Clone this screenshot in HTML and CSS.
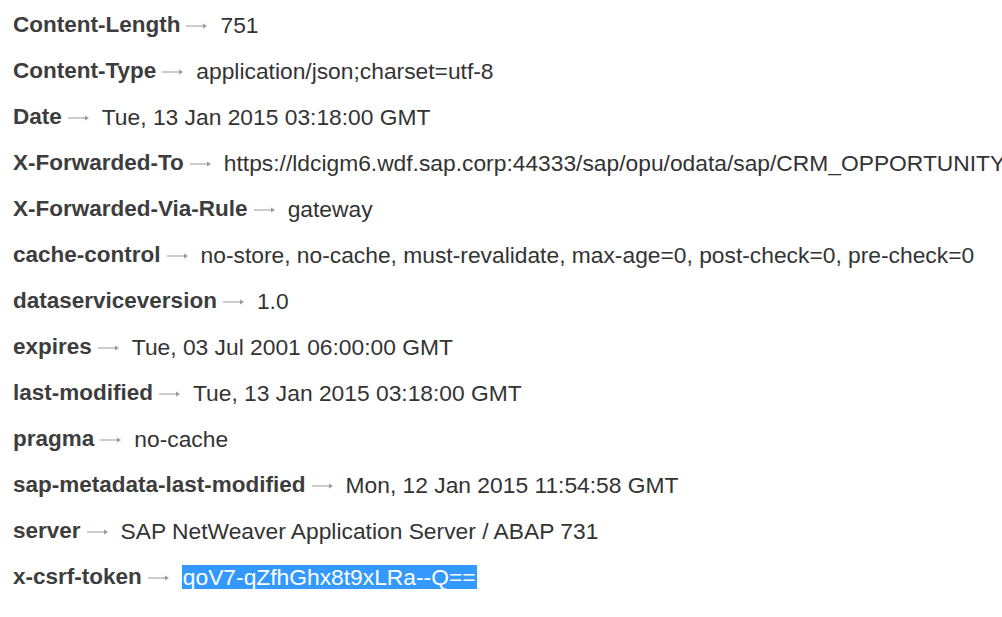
FILE: index.html
```html
<!DOCTYPE html>
<html lang="en">
<head>
    <meta charset="UTF-8">
    <title>Response Headers</title>
    <link rel="stylesheet" href="styles.css">
</head>
<body>
    <ul class="headers">
        <li><b>Content-Length</b><svg class="arrow" viewBox="0 0 22 8"><path d="M0 4h19"/><path class="head" d="M17 1.5l4 2.5-4 2.5z"/></svg><span class="val">751</span></li>
        <li><b>Content-Type</b><svg class="arrow" viewBox="0 0 22 8"><path d="M0 4h19"/><path class="head" d="M17 1.5l4 2.5-4 2.5z"/></svg><span class="val">application/json;charset=utf-8</span></li>
        <li><b>Date</b><svg class="arrow" viewBox="0 0 22 8"><path d="M0 4h19"/><path class="head" d="M17 1.5l4 2.5-4 2.5z"/></svg><span class="val">Tue, 13 Jan 2015 03:18:00 GMT</span></li>
        <li><b>X-Forwarded-To</b><svg class="arrow" viewBox="0 0 22 8"><path d="M0 4h19"/><path class="head" d="M17 1.5l4 2.5-4 2.5z"/></svg><span class="val">https://ldcigm6.wdf.sap.corp:44333/sap/opu/odata/sap/CRM_OPPORTUNITY</span></li>
        <li><b>X-Forwarded-Via-Rule</b><svg class="arrow" viewBox="0 0 22 8"><path d="M0 4h19"/><path class="head" d="M17 1.5l4 2.5-4 2.5z"/></svg><span class="val">gateway</span></li>
        <li><b>cache-control</b><svg class="arrow" viewBox="0 0 22 8"><path d="M0 4h19"/><path class="head" d="M17 1.5l4 2.5-4 2.5z"/></svg><span class="val">no-store, no-cache, must-revalidate, max-age=0, post-check=0, pre-check=0</span></li>
        <li><b>dataserviceversion</b><svg class="arrow" viewBox="0 0 22 8"><path d="M0 4h19"/><path class="head" d="M17 1.5l4 2.5-4 2.5z"/></svg><span class="val">1.0</span></li>
        <li><b>expires</b><svg class="arrow" viewBox="0 0 22 8"><path d="M0 4h19"/><path class="head" d="M17 1.5l4 2.5-4 2.5z"/></svg><span class="val">Tue, 03 Jul 2001 06:00:00 GMT</span></li>
        <li><b>last-modified</b><svg class="arrow" viewBox="0 0 22 8"><path d="M0 4h19"/><path class="head" d="M17 1.5l4 2.5-4 2.5z"/></svg><span class="val">Tue, 13 Jan 2015 03:18:00 GMT</span></li>
        <li><b>pragma</b><svg class="arrow" viewBox="0 0 22 8"><path d="M0 4h19"/><path class="head" d="M17 1.5l4 2.5-4 2.5z"/></svg><span class="val">no-cache</span></li>
        <li><b>sap-metadata-last-modified</b><svg class="arrow" viewBox="0 0 22 8"><path d="M0 4h19"/><path class="head" d="M17 1.5l4 2.5-4 2.5z"/></svg><span class="val">Mon, 12 Jan 2015 11:54:58 GMT</span></li>
        <li><b>server</b><svg class="arrow" viewBox="0 0 22 8"><path d="M0 4h19"/><path class="head" d="M17 1.5l4 2.5-4 2.5z"/></svg><span class="val">SAP NetWeaver Application Server / ABAP 731</span></li>
        <li><b>x-csrf-token</b><svg class="arrow" viewBox="0 0 22 8"><path d="M0 4h19"/><path class="head" d="M17 1.5l4 2.5-4 2.5z"/></svg><span class="val selected">qoV7-qZfhGhx8t9xLRa--Q==</span></li>
    </ul>
</body>
</html>
```

FILE: styles.css
```css
* {
    margin: 0;
    padding: 0;
    box-sizing: border-box;
}

body {
    background: #fff;
    color: #333;
    font-family: "Liberation Sans", Arial, sans-serif;
    overflow: hidden;
}

.headers {
    list-style: none;
    padding: 2px 0 0 13px;
}

.headers li {
    display: flex;
    align-items: center;
    height: 46px;
    white-space: nowrap;
}

.headers b {
    color: #3d3d3d;
    font-size: 22.5px;
    font-weight: bold;
}

.arrow {
    flex: none;
    width: 22px;
    height: 8px;
    margin: 2px 12px 0 6px;
}

.arrow path {
    stroke: #b0b0b0;
    stroke-width: 1.3;
    fill: none;
}

.arrow .head {
    stroke: none;
    fill: #9a9a9a;
}

.val {
    color: #333;
    font-size: 22.8px;
}

.selected {
    background: #3399ff;
    color: #fff;
    padding: 0 1px;
    line-height: 24px;
}
```
